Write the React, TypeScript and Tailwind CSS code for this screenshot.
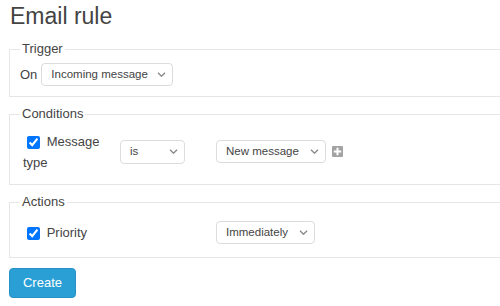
import React from "react";

const Chevron = () => (
  <svg width="9" height="5" viewBox="0 0 9 5" className="shrink-0">
    <path d="M1 0.8l3.5 3.4L8 0.8" fill="none" stroke="#8a8a8a" strokeWidth="1.4" />
  </svg>
);

function FakeSelect({ label, w, h = "h-[23px]" }: { label: string; w: string; h?: string }) {
  return (
    <div
      className={`${w} ${h} flex items-center justify-between border border-[#dcdcdc] rounded-[4px] bg-white pl-[9px] pr-[6px] text-[11.5px] text-[#444]`}
    >
      <span className="whitespace-nowrap">{label}</span>
      <Chevron />
    </div>
  );
}

const PlusIcon = () => (
  <svg width="11" height="11" viewBox="0 0 11 11">
    <rect x="0" y="0" width="11" height="11" rx="1" fill="#a3a3a3" />
    <path d="M5.5 1.8v7.4M1.8 5.5h7.4" stroke="#fff" strokeWidth="2" />
  </svg>
);

export default function App() {
  return (
    <div className="w-[500px] h-[306px] overflow-hidden bg-white pl-[9px] font-['Liberation_Sans',Arial,sans-serif] text-[#444]">
      <h1 className="mt-[2px] text-[23px] leading-[28px] text-[#444] pl-[1px]">Email rule</h1>

      <fieldset className="mt-[9px] w-[600px] border border-[#e6e6e6] px-[10px] pt-[4px] pb-[10px]">
        <legend className="px-[2px] text-[13px] leading-[20px]">Trigger</legend>
        <div className="flex items-center gap-[4px] h-[23px]">
          <span className="text-[13px]">On</span>
          <FakeSelect label="Incoming message" w="w-[132px]" />
        </div>
      </fieldset>

      <fieldset className="mt-[7px] w-[600px] border border-[#e6e6e6] px-[10px] pt-[4px] pb-[9px]">
        <legend className="px-[2px] text-[13px] leading-[20px]">Conditions</legend>
        <div className="grid grid-cols-[100px_96px_auto] items-center h-[47px]">
          <label className="pl-[3px] pr-[2px] text-[13px] leading-[21px]">
            <input type="checkbox" defaultChecked className="ml-[4px] mr-[3px] align-middle w-[13px] h-[13px]" />{" "}
            Message type
          </label>
          <FakeSelect label="is" w="w-[65px]" h="h-[24px]" />
          <div className="flex items-center gap-[6px]">
            <FakeSelect label="New message" w="w-[110px]" />
            <PlusIcon />
          </div>
        </div>
      </fieldset>

      <fieldset className="mt-[7px] w-[600px] border border-[#e6e6e6] px-[10px] pt-[4px] pb-[8px]">
        <legend className="px-[2px] text-[13px] leading-[20px]">Actions</legend>
        <div className="grid grid-cols-[100px_96px_auto] items-center h-[33px]">
          <label className="pl-[3px] pr-[2px] text-[13px] leading-[21px]">
            <input type="checkbox" defaultChecked className="ml-[4px] mr-[3px] align-middle w-[13px] h-[13px]" />{" "}
            Priority
          </label>
          <div />
          <div className="flex">
            <FakeSelect label="Immediately" w="w-[99px]" />
          </div>
        </div>
      </fieldset>

      <button className="mt-[10px] h-[30px] w-[67px] rounded-[4px] border border-[#2792c6] bg-[#2a9fd6] text-[13px] text-white">
        Create
      </button>
    </div>
  );
}
